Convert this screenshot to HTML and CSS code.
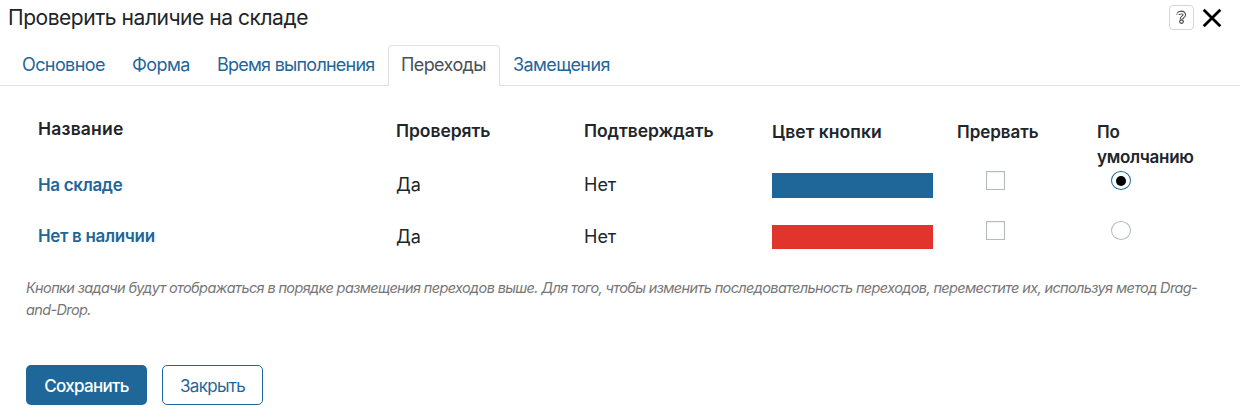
FILE: index.html
```html
<!DOCTYPE html>
<html lang="ru">
<head>
<meta charset="utf-8">
<title>Проверить наличие на складе</title>
<link rel="stylesheet" href="styles.css">
</head>
<body>
<div class="dialog">
  <header class="header">
    <h1 class="title"><span>Проверить наличие на складе</span></h1>
    <button class="help" aria-label="Справка">
      <svg width="11" height="15" viewBox="0 0 11 15"><path d="M2.2 5C2.4 1.6 8.3 1.6 8.3 4.8C8.3 7 5.5 6.8 5.5 9.2" fill="none" stroke="#444" stroke-width="3.6"/><circle cx="5.5" cy="11.6" r="2.4" fill="#444"/><path d="M1.6 4.8C2.4 1.9 8.3 1.9 8.3 4.8C8.3 7 5.5 6.8 5.5 8.8" fill="none" stroke="#fff" stroke-width="1.6"/><circle cx="5.5" cy="11.6" r="1.2" fill="#fff"/></svg>
    </button>
    <button class="close" aria-label="Закрыть окно">
      <svg width="20" height="20" viewBox="0 0 20 20"><path d="M1.7 1.7L18.3 18.3M18.3 1.7L1.7 18.3" stroke="#000" stroke-width="2.8"/></svg>
    </button>
  </header>
  <nav class="tabs">
    <a class="tab t1"><span>Основное</span></a>
    <a class="tab t2"><span>Форма</span></a>
    <a class="tab t3"><span>Время выполнения</span></a>
    <a class="tab t4 active"><span>Переходы</span></a>
    <a class="tab t5"><span>Замещения</span></a>
  </nav>
  <div class="table">
    <div class="row head">
      <div class="c-name"><span>Название</span></div>
      <div class="c-check"><span>Проверять</span></div>
      <div class="c-confirm"><span>Подтверждать</span></div>
      <div class="c-color low"><span>Цвет кнопки</span></div>
      <div class="c-abort low"><span>Прервать</span></div>
      <div class="c-default low"><span>По умолчанию</span></div>
    </div>
    <div class="row first">
      <a class="link"><span>На складе</span></a>
      <div><span>Да</span></div>
      <div><span>Нет</span></div>
      <div class="swatch blue"></div>
      <div class="control"><i class="checkbox"></i></div>
      <div class="control"><i class="radio checked"></i></div>
    </div>
    <div class="row second">
      <a class="link"><span>Нет в наличии</span></a>
      <div><span>Да</span></div>
      <div><span>Нет</span></div>
      <div class="swatch red"></div>
      <div class="control"><i class="checkbox"></i></div>
      <div class="control"><i class="radio"></i></div>
    </div>
  </div>
  <p class="note">Кнопки задачи будут отображаться в порядке размещения переходов выше. Для того, чтобы изменить последовательность переходов, переместите их, используя метод Drag-<br>and-Drop.</p>
  <footer class="actions">
    <button class="btn primary"><span>Сохранить</span></button>
    <button class="btn outline"><span>Закрыть</span></button>
  </footer>
</div>
</body>
</html>
```

FILE: styles.css
```css
* { box-sizing: border-box; }
body {
  margin: 0;
  background: #fff;
  color: #212529;
  font-family: Inter, "Liberation Sans", sans-serif;
  font-size: 18px;
  line-height: 25px;
}
button { font: inherit; padding: 0; border: 0; background: none; }
svg { display: block; }
.dialog { height: 409px; overflow: hidden; display: flex; flex-direction: column; }
.header { height: 45px; padding: 5px 18px 0 8px; display: flex; align-items: flex-start; }
.title { flex: 1; margin: 0; font-size: 21px; font-weight: 400; line-height: 26px; letter-spacing: -0.46px; }
.help {
  width: 25px; height: 25px; margin-right: 8px;
  border: 1px solid #d5d5d5; border-radius: 4px;
  display: flex; align-items: center; justify-content: center;
}
.close { width: 20px; height: 20px; margin-top: 3px; }
.tabs { height: 41px; padding-left: 8px; display: flex; border-bottom: 1px solid #dee2e6; }
.tab {
  height: 41px; padding: 6px 13px 0;
  border: 1px solid transparent; border-bottom: 0; border-radius: 4px 4px 0 0;
  color: #1f6699; letter-spacing: -0.6px; white-space: nowrap;
}
.t1 { width: 110px; }
.t2 { width: 85px; }
.t3 { width: 185px; letter-spacing: -0.76px; }
.t4 { width: 112px; }
.tab.active { color: #495057; border-color: #dee2e6; background: #fff; padding-left: 12px; }
.t5 { padding-left: 12px; }
.table { padding: 30px 0 0 38px; height: 188px; }
.row { display: grid; grid-template-columns: 358px 188px 188px 185px 140px 120px; }
.head { height: 56px; font-size: 17.5px; font-weight: 560; letter-spacing: -0.05px; }
.c-name { letter-spacing: 0.2px; }
.c-check, .c-confirm { padding-top: 2px; }
.low { padding-top: 3px; }
.c-color { letter-spacing: 0.05px; }
.c-abort, .c-default { font-size: 17px; letter-spacing: -0.3px; padding-top: 4px; }
.c-abort { letter-spacing: -0.05px; }
.first { height: 52px; }
.link { color: #1f6699; font-size: 17px; font-weight: 560; letter-spacing: -0.33px; }
.first .link { padding-top: 1px; }
.swatch { width: 161px; height: 25px; margin-top: 1px; }
.blue { background: #1f6699; }
.red { background: #e0342c; height: 24px; }
.checkbox { display: block; width: 19px; height: 19px; margin: -1px 0 0 29px; border: 1px solid #b4b9be; box-shadow: inset 0 1px 2px rgba(0,0,0,.07); }
.radio { display: flex; width: 20px; height: 19px; margin: -1px 0 0 14px; border: 1px solid #b4b9be; border-radius: 50%; align-items: center; justify-content: center; }
.checked { border-color: #1f6699; }
.checked::before { content: ""; width: 10px; height: 10px; border-radius: 50%; background: #000; }
.second .control { margin-top: -2px; }
.note { margin: 3px 0 0 26px; color: #777; font-size: 14.5px; font-style: italic; line-height: 22px; letter-spacing: -0.63px; white-space: nowrap; }
.actions { display: flex; gap: 15px; padding: 44px 0 0 26px; }
.btn { height: 40px; border-radius: 5px; font-size: 17px; letter-spacing: -0.7px; text-align: center; padding-top: 2px; }
.primary { width: 121px; background: #1f6699; color: #fff; font-weight: 550; }
.outline { width: 101px; border: 1px solid #1f6699; color: #1f6699; }
```
